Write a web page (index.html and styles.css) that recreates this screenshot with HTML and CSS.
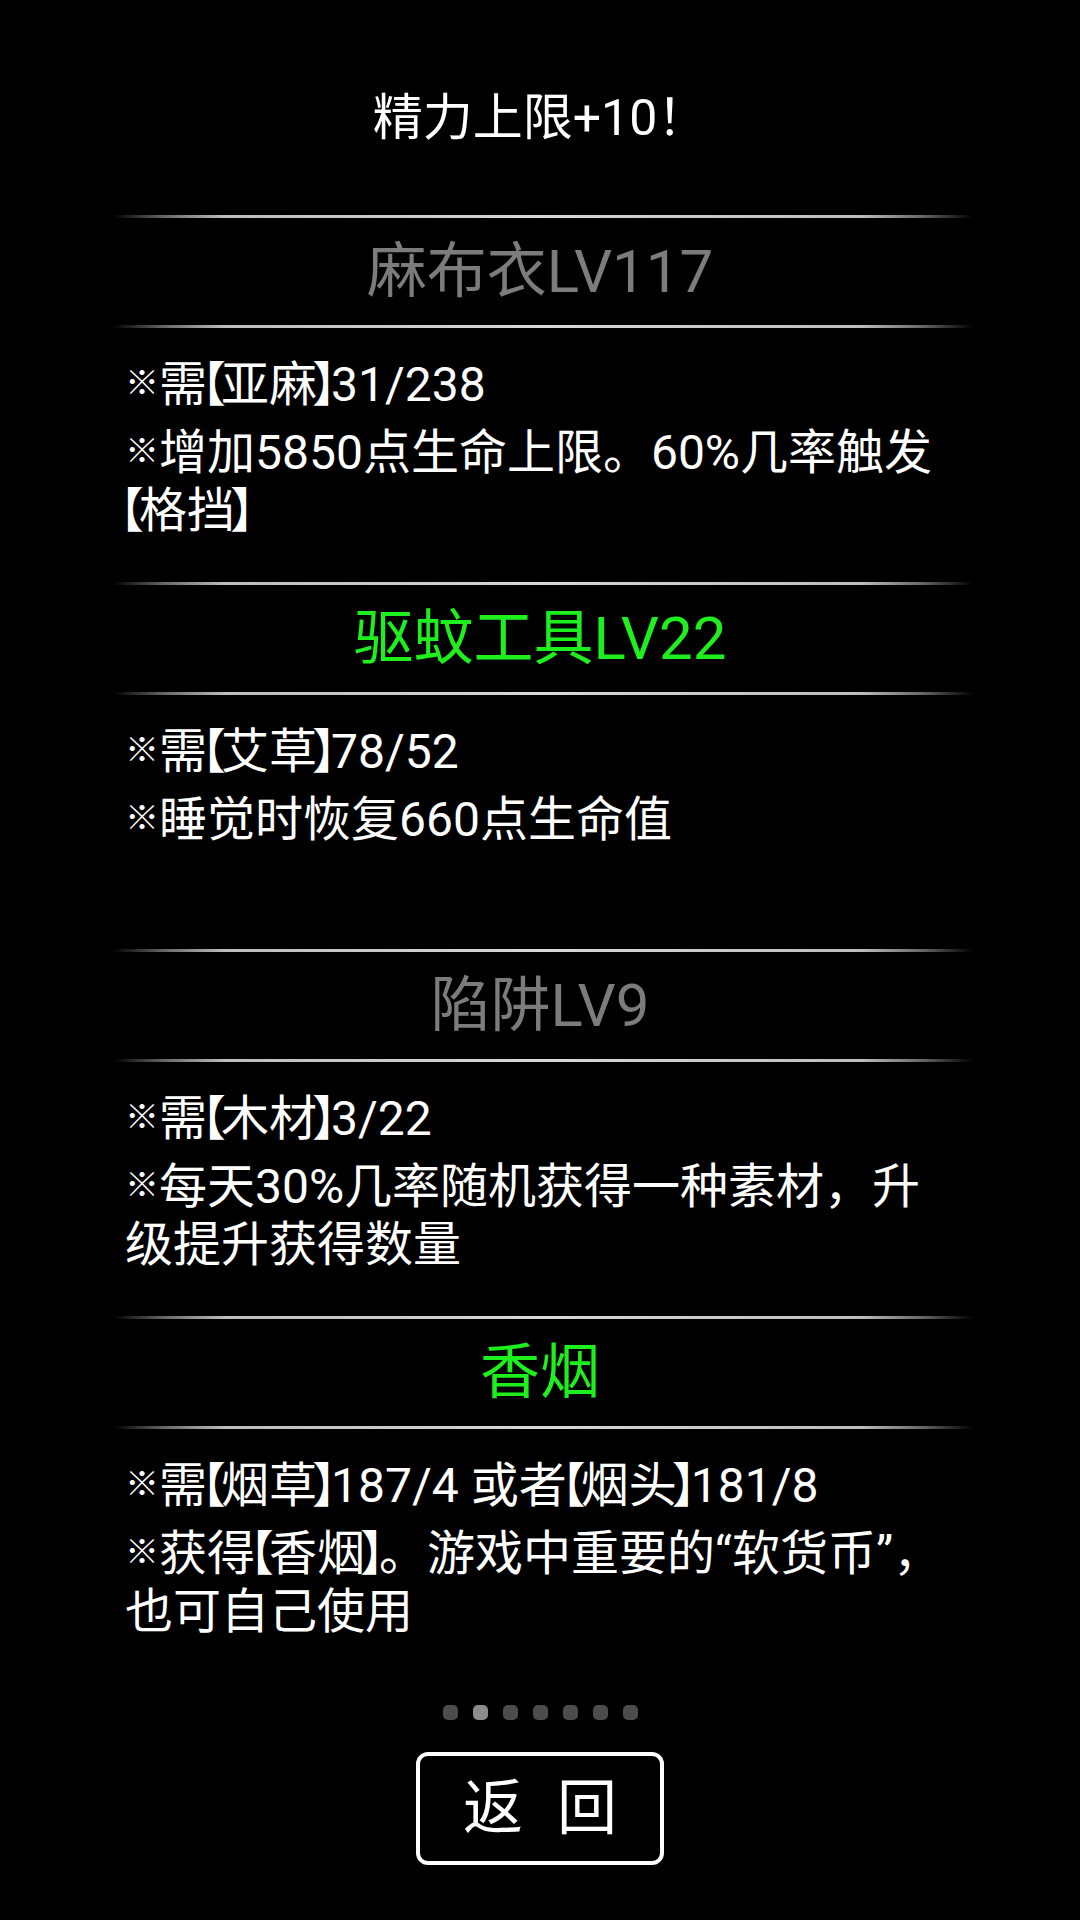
FILE: index.html
```html
<!DOCTYPE html>
<html lang="zh-CN">
<head>
<meta charset="utf-8">
<title>精力上限</title>
<link rel="stylesheet" href="styles.css">
</head>
<body>
<div class="screen">
  <div class="title">精力上限+10！</div>
  <div class="panel">
    <div class="rule"></div>
    <div class="head grey">麻布衣LV117</div>
    <div class="rule"></div>
    <div class="body">
      <p><span class="rm">※</span>需<span class="bk">【</span>亚麻<span class="bk">】</span>31/238</p>
      <p><span class="rm">※</span>增加5850点生命上限。60%几率触发<span class="bk">【</span>格挡<span class="bk">】</span></p>
    </div>

    <div class="rule"></div>
    <div class="head green">驱蚊工具LV22</div>
    <div class="rule"></div>
    <div class="body">
      <p><span class="rm">※</span>需<span class="bk">【</span>艾草<span class="bk">】</span>78/52</p>
      <p><span class="rm">※</span>睡觉时恢复660点生命值</p>
    </div>

    <div class="rule"></div>
    <div class="head grey">陷阱LV9</div>
    <div class="rule"></div>
    <div class="body">
      <p><span class="rm">※</span>需<span class="bk">【</span>木材<span class="bk">】</span>3/22</p>
      <p><span class="rm">※</span>每天30%几率随机获得一种素材，升级提升获得数量</p>
    </div>

    <div class="rule"></div>
    <div class="head green">香烟</div>
    <div class="rule"></div>
    <div class="body">
      <p><span class="rm">※</span>需<span class="bk">【</span>烟草<span class="bk">】</span>187/4 或者<span class="bk">【</span>烟头<span class="bk">】</span>181/8</p>
      <p><span class="rm">※</span>获得<span class="bk">【</span>香烟<span class="bk">】</span>。游戏中重要的“软货币”，也可自己使用</p>
    </div>
  </div>

  <div class="dots">
    <span class="dot"></span>
    <span class="dot active"></span>
    <span class="dot"></span>
    <span class="dot"></span>
    <span class="dot"></span>
    <span class="dot"></span>
    <span class="dot"></span>
  </div>

  <div class="btn-row">
    <div class="btn"><span>返</span><span>回</span></div>
  </div>
</div>
</body>
</html>
```

FILE: styles.css
```css
html, body {
  margin: 0;
  padding: 0;
  background: #000;
}

body {
  width: 1080px;
  height: 1920px;
  overflow: hidden;
  font-family: Roboto, "Noto Sans CJK SC", sans-serif;
  color: #fff;
}

.screen {
  display: flex;
  flex-direction: column;
  align-items: center;
  padding-top: 88px;
}

.title {
  font-size: 50px;
  line-height: 60px;
  height: 60px;
  color: #fff;
  text-align: center;
  margin-bottom: 67px;
}

.panel {
  width: 860px;
  margin-left: 6px;
  display: flex;
  flex-direction: column;
}

.rule {
  height: 3px;
  background: linear-gradient(to right,
    rgba(200,200,200,0) 0%,
    rgba(190,190,190,0.55) 6%,
    #bdbdbd 13%,
    #d8d8d8 50%,
    #bdbdbd 87%,
    rgba(190,190,190,0.55) 94%,
    rgba(200,200,200,0) 100%);
}

.head {
  height: 107px;
  display: flex;
  align-items: center;
  justify-content: center;
  font-size: 60px;
  line-height: 70px;
  margin-left: -6px;
}

.grey { color: #7c7c7c; }
.green { color: #1ef01e; }

.body {
  height: 254px;
  box-sizing: border-box;
  width: 844px;
  padding: 26px 0 0 12px;
  font-size: 48px;
  line-height: 58px;
}

.body p {
  margin: 0 0 8px 0;
}

.rm {
  font-size: 34px;
  vertical-align: 0.18em;
}

.bk {
  font-feature-settings: "halt" 1;
  margin: 0 -5px;
}

.dots {
  display: flex;
  gap: 15px;
  margin-top: 22px;
}

.dot {
  width: 15px;
  height: 15px;
  border-radius: 5px;
  background: #4c4c4c;
}

.dot.active {
  background: #8c8c8c;
}

.btn-row {
  margin-top: 32px;
  display: flex;
  justify-content: center;
}

.btn {
  width: 248px;
  height: 113px;
  box-sizing: border-box;
  border: 4px solid #fff;
  border-radius: 12px;
  display: flex;
  align-items: center;
  justify-content: center;
  gap: 34px;
  font-size: 60px;
  line-height: 70px;
  color: #fff;
}
```
